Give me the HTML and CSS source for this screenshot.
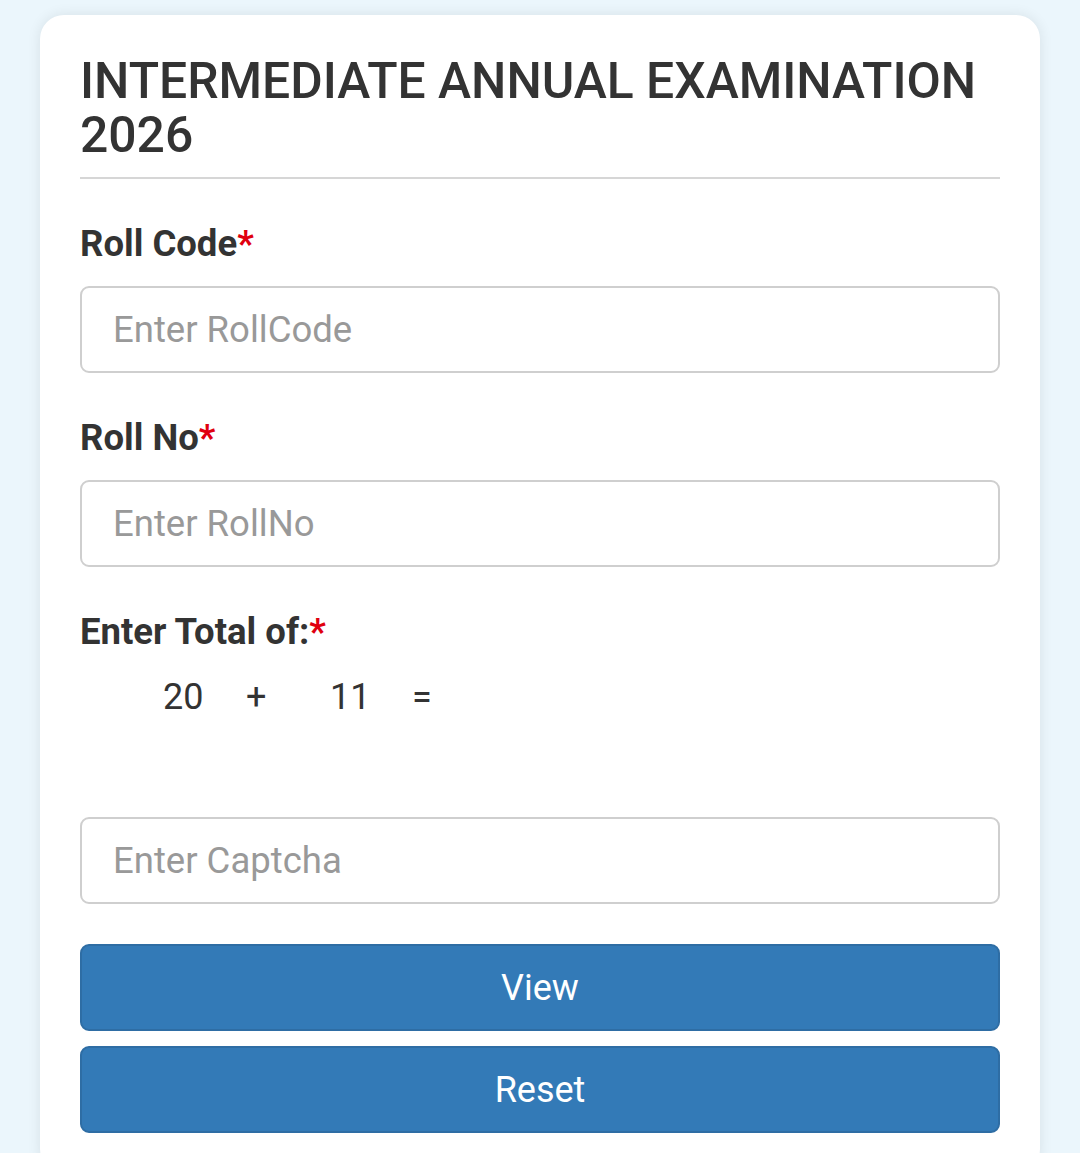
FILE: index.html
```html
<!DOCTYPE html>
<html lang="en">
<head>
<meta charset="utf-8">
<title>Intermediate Annual Examination 2026</title>
<link rel="stylesheet" href="styles.css">
</head>
<body>
<div class="card">
  <h3 class="title">INTERMEDIATE ANNUAL EXAMINATION 2026</h3>
  <hr class="rule">
  <form class="form">
    <div class="group">
      <label class="label" for="rollcode">Roll Code<span class="req">*</span></label>
      <input class="field" id="rollcode" type="text" placeholder="Enter RollCode">
    </div>
    <div class="group">
      <label class="label" for="rollno">Roll No<span class="req">*</span></label>
      <input class="field" id="rollno" type="text" placeholder="Enter RollNo">
    </div>
    <div class="group captcha-group">
      <label class="label" for="captcha">Enter Total of:<span class="req">*</span></label>
      <div class="sum">
        <span class="n1">20</span>
        <span class="op">+</span>
        <span class="n2">11</span>
        <span class="eq">=</span>
      </div>
      <input class="field" id="captcha" type="text" placeholder="Enter Captcha">
    </div>
    <div class="actions">
      <button type="button" class="btn">View</button>
      <button type="reset" class="btn">Reset</button>
    </div>
  </form>
</div>
</body>
</html>
```
FILE: styles.css
```css
html, body {
  margin: 0;
  padding: 0;
}
body {
  background: #ebf6fc;
  font-family: Roboto, "Liberation Sans", Arial, sans-serif;
  color: #333;
  padding: 15px 40px 0 40px;
}
.card {
  background: #fff;
  border-radius: 24px;
  box-shadow: 0 0 14px rgba(0, 0, 0, 0.09);
  padding: 39px 40px 40px 40px;
}
.title {
  margin: 0;
  font-size: 49.8px;
  font-weight: 500;
  line-height: 54px;
  color: #333;
}
.rule {
  margin: 15px 0 0 0;
  border: 0;
  border-top: 2px solid #d6d6d6;
  height: 0;
}
.form {
  padding-top: 43px;
}
.group {
  margin-bottom: 43px;
}
.label {
  display: block;
  font-size: 36.5px;
  font-weight: 700;
  line-height: 43px;
  margin-bottom: 21px;
  color: #333;
}
.req {
  color: #e0000f;
}
.field {
  display: block;
  box-sizing: border-box;
  width: 100%;
  height: 87px;
  border: 2px solid #cfcfcf;
  border-radius: 9px;
  padding: 0 31px;
  font-family: Roboto, "Liberation Sans", Arial, sans-serif;
  font-size: 36.5px;
  color: #555;
  background: #fff;
  outline: none;
}
.field::placeholder {
  color: #999;
}
.sum {
  display: flex;
  padding-left: 83px;
  padding-top: 2px;
  font-size: 36px;
  line-height: 43px;
  color: #333;
  margin-bottom: 98px;
}
.sum span {
  display: block;
}
.n1 { width: 83px; }
.op { width: 84px; }
.n2 { width: 82px; }
.captcha-group {
  margin-bottom: 40px;
}
.actions {
  display: flex;
  flex-direction: column;
  gap: 15px;
}
.btn {
  box-sizing: border-box;
  width: 100%;
  height: 87px;
  background: #337ab7;
  border: 2px solid #2e6da4;
  border-radius: 9px;
  color: #fff;
  font-family: Roboto, "Liberation Sans", Arial, sans-serif;
  font-size: 36px;
  padding: 0;
}
```
